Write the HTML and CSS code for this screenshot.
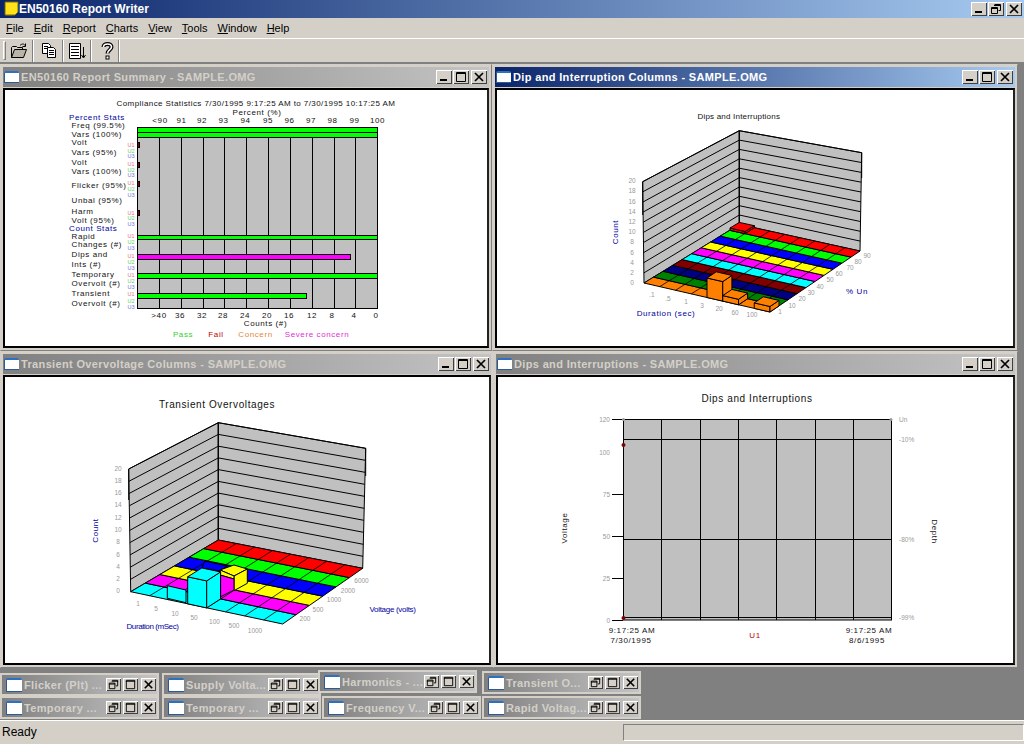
FILE: index.html
```html
<!DOCTYPE html>
<html lang="en">
<head>
    <meta charset="UTF-8">
    <title>EN50160 Report Writer</title>
    <link rel="stylesheet" href="styles.css">
</head>
<body>
<svg class="defs">
    <symbol id="g-min" viewBox="0 0 16 14"><rect x="4" y="9" width="7" height="2" fill="#000"/></symbol>
    <symbol id="g-max" viewBox="0 0 16 14"><path d="M3.5 2.5h9v9h-9z M3 3.5h10" fill="none" stroke="#000"/></symbol>
    <symbol id="g-res" viewBox="0 0 16 14"><path d="M6.5 2.5h6v6h-2 M6 3.5h7 M3.5 5.5h6v6h-6z M3 6.5h7" fill="none" stroke="#000"/></symbol>
    <symbol id="g-x" viewBox="0 0 16 14"><path d="M4 3l8 8M12 3l-8 8" fill="none" stroke="#000" stroke-width="1.7"/></symbol>
</svg>
<div class="app">
    <div class="titlebar">
        <svg class="appicon" width="16" height="16" viewBox="0 0 16 16"><path d="M0 13h3v2h6l2-2H3z" fill="#444"/><path d="M2 1h13v10l-3 3H2z" fill="#ffe21a" stroke="#7a6a00"/></svg>
        <span class="apptitle">EN50160 Report Writer</span>
        <div class="btns btns-main">
            <span class="btn"><svg class="g"><use href="#g-min"/></svg></span>
            <span class="btn"><svg class="g"><use href="#g-res"/></svg></span>
            <span class="btn btn-close"><svg class="g"><use href="#g-x"/></svg></span>
        </div>
    </div>
    <ul class="menu">
        <li><u>F</u>ile</li>
        <li><u>E</u>dit</li>
        <li><u>R</u>eport</li>
        <li><u>C</u>harts</li>
        <li><u>V</u>iew</li>
        <li><u>T</u>ools</li>
        <li><u>W</u>indow</li>
        <li><u>H</u>elp</li>
    </ul>
    <div class="toolbar">
        <span class="grip"></span>
        <span class="tool tool-open">
            <svg width="18" height="16" viewBox="0 0 18 16"><path d="M1.5 14.5V4.5l1-1h4l1 1h5v2" fill="#d4d0c8" stroke="#000"/><path d="M1.5 14.5l3-8h12l-3 8z" fill="#b8b4a8" stroke="#000"/><path d="M10 2.5c2-2 4-2 5 0M15.5 0.5v3h-3" fill="none" stroke="#000"/></svg>
        </span>
        <span class="tool tool-copy">
            <svg width="16" height="15" viewBox="0 0 16 15"><path d="M1.5 0.5h6l2 2v8h-8z" fill="#fff" stroke="#000"/><path d="M6.5 4.5h6l2 2v8h-8z" fill="#fff" stroke="#000"/><path d="M3 3.5h4M3 5.5h3M8 7.5h5M8 9.5h5M8 11.5h5" stroke="#000"/></svg>
        </span>
        <span class="tool tool-report">
            <svg width="17" height="16" viewBox="0 0 17 16"><path d="M0.5 0.5h11v15h-11z" fill="#fff" stroke="#000"/><path d="M2 3.5h8M2 6.5h8M2 9.5h8M2 12.5h8" stroke="#000"/><path d="M14.5 4v10M12.5 12l2 3 2-3" fill="none" stroke="#000"/></svg>
        </span>
        <span class="tool tool-help">
            <svg width="13" height="18" viewBox="0 0 13 18"><path d="M2.5 5c0-4 8-4 8 0 0 3-4 3-4 6.5" fill="none" stroke="#000" stroke-width="4"/><path d="M2.5 5c0-4 8-4 8 0 0 3-4 3-4 6.5" fill="none" stroke="#fff" stroke-width="1.6"/><rect x="4.5" y="13.5" width="4" height="4" fill="#000"/><rect x="5.5" y="14.5" width="2" height="2" fill="#fff"/></svg>
        </span>
    </div>

    <div class="desk">
        <!-- compliance summary -->
        <div class="win win-summary">
            <div class="cap">
                <span class="docicon"></span>
                <span class="captext">EN50160 Report Summary - SAMPLE.OMG</span>
                <div class="btns">
                    <span class="btn"><svg class="g"><use href="#g-min"/></svg></span>
                    <span class="btn"><svg class="g"><use href="#g-max"/></svg></span>
                    <span class="btn btn-close"><svg class="g"><use href="#g-x"/></svg></span>
                </div>
            </div>
            <div class="client">
                <svg class="chart" viewBox="5 90 482 256" width="482" height="256">
                    <text class="ct title1" x="256" y="106" text-anchor="middle" textLength="279" lengthAdjust="spacing">Compliance Statistics 7/30/1995 9:17:25 AM to 7/30/1995 10:17:25 AM</text>
                    <text class="ct" x="257" y="115" text-anchor="middle">Percent (%)</text>
                    <g class="ct" text-anchor="middle">
                        <text x="160" y="122.5">&lt;90</text><text x="181.5" y="122.5">91</text><text x="202" y="122.5">92</text><text x="223.5" y="122.5">93</text><text x="245.5" y="122.5">94</text><text x="268" y="122.5">95</text><text x="289.5" y="122.5">96</text><text x="311" y="122.5">97</text><text x="332.5" y="122.5">98</text><text x="354.5" y="122.5">99</text><text x="377.5" y="122.5">100</text>
                    </g>
                    <g class="ct nv">
                        <text x="69" y="119.5">Percent Stats</text>
                        <text x="69" y="230.5">Count Stats</text>
                    </g>
                    <g class="ct">
                        <text x="71.5" y="128">Freq (99.5%)</text><text x="71.5" y="137">Vars (100%)</text>
                        <text x="71.5" y="145">Volt</text><text x="71.5" y="154.5">Vars (95%)</text>
                        <text x="71.5" y="165">Volt</text><text x="71.5" y="173.5">Vars (100%)</text>
                        <text x="71.5" y="188">Flicker (95%)</text>
                        <text x="71.5" y="203">Unbal (95%)</text>
                        <text x="71.5" y="214">Harm</text><text x="71.5" y="222.5">Volt (95%)</text>
                        <text x="71.5" y="238.5">Rapid</text><text x="71.5" y="246.5">Changes (#)</text>
                        <text x="71.5" y="257">Dips and</text><text x="71.5" y="266.5">Ints (#)</text>
                        <text x="71.5" y="277">Temporary</text><text x="71.5" y="285.5">Overvolt (#)</text>
                        <text x="71.5" y="296">Transient</text><text x="71.5" y="305.5">Overvolt (#)</text>
                    </g>
                    <g class="tiny u1">
                        <text x="127.5" y="146.5">U1</text><text x="127.5" y="165.5">U1</text><text x="127.5" y="185">U1</text><text x="127.5" y="214.5">U1</text><text x="127.5" y="238">U1</text><text x="127.5" y="258">U1</text><text x="127.5" y="277">U1</text><text x="127.5" y="296">U1</text>
                    </g>
                    <g class="tiny u2">
                        <text x="127.5" y="152.5">U2</text><text x="127.5" y="171.5">U2</text><text x="127.5" y="191">U2</text><text x="127.5" y="220">U2</text><text x="127.5" y="244">U2</text><text x="127.5" y="264">U2</text><text x="127.5" y="283">U2</text><text x="127.5" y="303">U2</text>
                    </g>
                    <g class="tiny u3">
                        <text x="127.5" y="158">U3</text><text x="127.5" y="177">U3</text><text x="127.5" y="197">U3</text><text x="127.5" y="225.5">U3</text><text x="127.5" y="250">U3</text><text x="127.5" y="270">U3</text><text x="127.5" y="289">U3</text><text x="127.5" y="309">U3</text>
                    </g>
                    <rect class="wall" x="137.5" y="127.5" width="240" height="181"/>
                    <path class="ln" d="M159.5 127V309M181.5 127V309M203.5 127V309M224.5 127V309M246.5 127V309M268.5 127V309M290.5 127V309M312.5 127V309M334.5 127V309M355.5 127V309"/>
                    <g class="barg">
                        <rect class="f-green" x="137.5" y="127.5" width="240" height="5"/>
                        <rect class="f-green" x="137.5" y="132.5" width="240" height="5"/>
                        <rect class="f-maroon" x="137.5" y="142.5" width="2" height="5"/>
                        <rect class="f-maroon" x="137.5" y="162.5" width="2" height="5"/>
                        <rect class="f-maroon" x="137.5" y="181.5" width="2" height="5"/>
                        <rect class="f-maroon" x="137.5" y="210.5" width="2" height="5"/>
                        <rect class="f-green" x="137.5" y="235.5" width="240" height="4"/>
                        <rect class="f-magenta" x="137.5" y="254.5" width="213" height="5"/>
                        <rect class="f-green" x="137.5" y="273.5" width="240" height="5"/>
                        <rect class="f-green" x="137.5" y="293.5" width="169" height="5"/>
                    </g>
                    <g class="ct" text-anchor="middle">
                        <text x="159" y="317.5">&gt;40</text><text x="180" y="317.5">36</text><text x="202" y="317.5">32</text><text x="223" y="317.5">28</text><text x="245" y="317.5">24</text><text x="267" y="317.5">20</text><text x="289" y="317.5">16</text><text x="312" y="317.5">12</text><text x="332" y="317.5">8</text><text x="354" y="317.5">4</text><text x="376" y="317.5">0</text>
                        <text x="265.5" y="326">Counts (#)</text>
                    </g>
                    <g class="ct" text-anchor="middle">
                        <text class="lg-pass" x="183" y="337">Pass</text>
                        <text class="lg-fail" x="216" y="337">Fail</text>
                        <text class="lg-conc" x="255.5" y="337">Concern</text>
                        <text class="lg-sev" x="317" y="337">Severe concern</text>
                    </g>
                </svg>
            </div>
        </div>

        <!-- dip columns -->
        <div class="win win-dipcol">
            <div class="cap cap-active">
                <span class="docicon"></span>
                <span class="captext">Dip and Interruption Columns - SAMPLE.OMG</span>
                <div class="btns">
                    <span class="btn"><svg class="g"><use href="#g-min"/></svg></span>
                    <span class="btn"><svg class="g"><use href="#g-max"/></svg></span>
                    <span class="btn btn-close"><svg class="g"><use href="#g-x"/></svg></span>
                </div>
            </div>
            <div class="client">
                <svg class="chart" viewBox="497 90 516 256" width="516" height="256">
                    <text class="ct" x="739" y="119" text-anchor="middle" textLength="83" lengthAdjust="spacing">Dips and Interruptions</text>
                    <polygon class="wall" points="642.7,181.7 739.3,130.7 739.3,224.4 644,283"/>
                    <polygon class="wall" points="739.3,130.7 861.7,152.7 860,251 739.3,224.4"/>
                    <path class="ln" d="M642.7 181.7L739.3 130.7M642.8 191.8L739.3 140.1M643 202L739.3 149.4M643.1 212.1L739.3 158.8M643.2 222.2L739.3 168.2M643.4 232.4L739.3 177.6M643.5 242.5L739.3 186.9M643.6 252.6L739.3 196.3M643.7 262.7L739.3 205.7M643.9 272.9L739.3 215M739.3 130.7V224.4M642.7 181.7V215"/>
                    <path class="ln" d="M739.3 130.7L861.7 152.7M739.3 140.1L861.5 162.5M739.3 149.4L861.4 172.4M739.3 158.8L861.2 182.2M739.3 168.2L861 192M739.3 177.6L860.9 201.9M739.3 186.9L860.7 211.7M739.3 196.3L860.5 221.5M739.3 205.7L860.3 231.3M739.3 215L860.2 241.1M861.7 152.7V178"/>
                    <g class="floor">
                        <polygon class="f-orange" points="644,283 770,312 779,305.9 653.5,277.1"/>
                        <polygon class="f-dgreen" points="653.5,277.1 779,305.9 788,299.8 663.1,271.3"/>
                        <polygon class="f-navy" points="663.1,271.3 788,299.8 797,293.7 672.6,265.4"/>
                        <polygon class="f-maroon" points="672.6,265.4 797,293.7 806,287.6 682.1,259.6"/>
                        <polygon class="f-cyan" points="682.1,259.6 806,287.6 815,281.5 691.7,253.7"/>
                        <polygon class="f-magenta" points="691.7,253.7 815,281.5 824,275.4 701.2,247.8"/>
                        <polygon class="f-yellow" points="701.2,247.8 824,275.4 833,269.3 710.7,242"/>
                        <polygon class="f-blue" points="710.7,242 833,269.3 842,263.2 720.2,236.1"/>
                        <polygon class="f-green" points="720.2,236.1 842,263.2 851,257.1 729.8,230.3"/>
                        <polygon class="f-red" points="729.8,230.3 851,257.1 860,251 739.3,224.4"/>
                        <path d="M659.75 286.6L754.4 227.7M675.5 290.3L769.5 231.1M691.25 293.9L784.6 234.4M707 297.5L799.7 237.7M722.75 301.1L814.7 241M738.5 304.8L829.8 244.4M754.25 308.4L844.9 247.7"/>
                        <polygon class="f-red" points="730,228 745,231.5 745,233.65 730,230.3"/>
                        <polygon class="f-red" points="745,231.5 754.4,225.7 754.4,227.7 745,233.65"/>
                        <polygon class="f-red" points="730,228 739.3,222.4 754.4,225.7 745,231.5"/>
                        <polygon class="f-orange" points="707,297.5 722.75,301.1 722.75,281.6 707,278"/>
                        <polygon class="f-orange" points="722.75,301.1 731.9,295 731.9,275.45 722.75,281.6"/>
                        <polygon class="f-orange" points="707,278 722.75,281.6 731.9,275.45 716.25,271.8"/>
                        <polygon class="f-orange" points="722.75,301.1 738.5,304.8 738.5,299.3 722.75,295.6"/>
                        <polygon class="f-orange" points="738.5,304.8 747.6,298.7 747.6,293.1 738.5,299.3"/>
                        <polygon class="f-orange" points="722.75,295.6 738.5,299.3 747.6,293.1 731.9,289.45"/>
                        <polygon class="f-orange" points="754.25,308.4 770,312 770,306.5 754.25,302.9"/>
                        <polygon class="f-orange" points="770,312 779,305.9 779,300.4 770,306.5"/>
                        <polygon class="f-orange" points="754.25,302.9 770,306.5 779,300.4 763.3,296.75"/>
                    </g>
                    <g class="num" text-anchor="middle">
                        <text x="632" y="285">0</text><text x="632" y="275">2</text><text x="632" y="265">4</text><text x="632" y="254.5">6</text><text x="632" y="244">8</text><text x="632" y="234">10</text><text x="632" y="224">12</text><text x="632" y="214">14</text><text x="632" y="203.5">16</text><text x="632" y="193">18</text><text x="632" y="183">20</text>
                        <text x="652" y="297">.1</text><text x="668" y="301">.5</text><text x="686" y="304">1</text><text x="702" y="308">3</text><text x="719" y="311">20</text><text x="735" y="315">60</text><text x="752" y="317">100</text>
                        <text x="780" y="314">1</text><text x="792" y="308">10</text><text x="802" y="301">20</text><text x="811" y="295">30</text><text x="820" y="289">40</text><text x="830" y="282">50</text><text x="839" y="276">60</text><text x="850" y="270">70</text><text x="858" y="264">80</text><text x="867" y="258">90</text>
                    </g>
                    <text class="ct nv" transform="translate(617.5 232) rotate(-90)" text-anchor="middle">Count</text>
                    <text class="ct nv" x="666" y="316" text-anchor="middle">Duration (sec)</text>
                    <text class="ct nv" x="857" y="294" text-anchor="middle">% Un</text>
                </svg>
            </div>
        </div>

        <!-- transient columns -->
        <div class="win win-transient">
            <div class="cap">
                <span class="docicon"></span>
                <span class="captext">Transient Overvoltage Columns - SAMPLE.OMG</span>
                <div class="btns">
                    <span class="btn"><svg class="g"><use href="#g-min"/></svg></span>
                    <span class="btn"><svg class="g"><use href="#g-max"/></svg></span>
                    <span class="btn btn-close"><svg class="g"><use href="#g-x"/></svg></span>
                </div>
            </div>
            <div class="client">
                <svg class="chart" viewBox="5 377 484 286" width="484" height="286">
                    <text class="ct ct-big" x="217" y="408" text-anchor="middle">Transient Overvoltages</text>
                    <polygon class="wall" points="128.7,469 218.3,422.7 218.3,540 130.7,591.7"/>
                    <polygon class="wall" points="218.3,422.7 365.7,448.3 362.7,568.3 218.3,540"/>
                    <path class="ln" d="M128.7 469L218.3 422.7M128.9 481.3L218.3 434.4M129.1 493.5L218.3 446.2M129.3 505.8L218.3 457.9M129.5 518.1L218.3 469.6M129.7 530.4L218.3 481.4M129.9 542.6L218.3 493.1M130.1 554.9L218.3 504.8M130.3 567.2L218.3 516.5M130.5 579.4L218.3 528.3M218.3 422.7V540M128.7 469V500"/>
                    <path class="ln" d="M218.3 422.7L365.7 448.3M218.3 434.4L365.4 460.3M218.3 446.2L365.1 472.3M218.3 457.9L364.8 484.3M218.3 469.6L364.5 496.3M218.3 481.4L364.2 508.3M218.3 493.1L363.9 520.3M218.3 504.8L363.6 532.3M218.3 516.5L363.3 544.3M218.3 528.3L363 556.3M365.7 448.3V476"/>
                    <g class="floor">
                        <polygon class="f-cyan" points="130.7,591.7 282.7,624 296,614.7 145.3,583.1"/>
                        <polygon class="f-magenta" points="145.3,583.1 296,614.7 309.4,605.4 159.9,574.5"/>
                        <polygon class="f-yellow" points="159.9,574.5 309.4,605.4 322.7,596.2 174.5,565.9"/>
                        <polygon class="f-blue" points="174.5,565.9 322.7,596.2 336,586.9 189.1,557.2"/>
                        <polygon class="f-green" points="189.1,557.2 336,586.9 349.4,577.6 203.7,548.6"/>
                        <polygon class="f-red" points="203.7,548.6 349.4,577.6 362.7,568.3 218.3,540"/>
                        <path d="M149.7 595.7L236.4 543.5M168.7 599.8L254.4 547.1M187.7 603.8L272.4 550.6M206.7 607.9L290.5 554.2M225.7 611.9L308.6 557.7M244.7 615.9L326.6 561.2M263.7 620L344.7 564.8"/>
                        <polygon class="f-cyan" points="167.3,585.7 186,590 186,602.7 167.3,598.3"/>
                        <polygon class="f-blue" points="205,561 227,566 220,571 201.8,568"/>
                        <polygon class="f-yellow" points="220,570 234,565 247.3,569 234,576"/>
                        <polygon class="f-yellow" points="234,576 247.3,569 247.3,583.3 234,590.7"/>
                        <polygon class="f-yellow" points="220,570 234,576 234,579 220,575"/>
                        <polygon class="f-magenta" points="220,575 234,579 234,590 220,597"/>
                        <polygon class="f-cyan" points="187.7,603.8 206.7,607.9 206.7,580.9 187.7,576.8"/>
                        <polygon class="f-cyan" points="206.7,607.9 220.6,598.9 220.6,571.9 206.7,580.9"/>
                        <polygon class="f-cyan" points="187.7,576.8 206.7,580.9 220.6,571.9 201.8,568"/>
                    </g>
                    <g class="num" text-anchor="middle">
                        <text x="118" y="593">0</text><text x="118" y="581">2</text><text x="118" y="568.5">4</text><text x="118" y="556.5">6</text><text x="118" y="544">8</text><text x="118" y="532">10</text><text x="118" y="519.5">12</text><text x="118" y="507">14</text><text x="118" y="495">16</text><text x="118" y="483">18</text><text x="118" y="470.5">20</text>
                        <text x="138" y="606">1</text><text x="156" y="611">5</text><text x="175" y="616">10</text><text x="194" y="620">50</text><text x="214.5" y="624">100</text><text x="234" y="628">500</text><text x="255" y="633">1000</text>
                        <text x="305" y="621">200</text><text x="318" y="612">500</text><text x="334" y="602">1000</text><text x="348" y="593">2000</text><text x="361.5" y="583">6000</text>
                    </g>
                    <text class="ct nv" transform="translate(98 530.5) rotate(-90)" text-anchor="middle">Count</text>
                    <text class="ct nv" x="153" y="628.5" text-anchor="middle" textLength="53" lengthAdjust="spacing">Duration (mSec)</text>
                    <text class="ct nv" x="393" y="612" text-anchor="middle" textLength="47" lengthAdjust="spacing">Voltage (volts)</text>
                </svg>
            </div>
        </div>

        <!-- dips timeline -->
        <div class="win win-dips">
            <div class="cap">
                <span class="docicon"></span>
                <span class="captext">Dips and Interruptions - SAMPLE.OMG</span>
                <div class="btns">
                    <span class="btn"><svg class="g"><use href="#g-min"/></svg></span>
                    <span class="btn"><svg class="g"><use href="#g-max"/></svg></span>
                    <span class="btn btn-close"><svg class="g"><use href="#g-x"/></svg></span>
                </div>
            </div>
            <div class="client">
                <svg class="chart" viewBox="498 377 515 286" width="515" height="286">
                    <text class="ct ct-big" x="757" y="401.5" text-anchor="middle">Dips and Interruptions</text>
                    <rect class="wall" x="623.5" y="419.5" width="268" height="200.5"/>
                    <path class="ln" d="M661.5 420V620M700.5 420V620M738.5 420V620M776.5 420V620M815.5 420V620M853.5 420V620M624 439.5H891M624 539.5H891M624 617.5H891M612 419.5H623M612 494.5H623M612 536.5H623M612 578.5H623M612 620.5H623"/>
                    <circle class="dot" cx="623.5" cy="445" r="2"/>
                    <circle class="dot" cx="623.5" cy="618" r="2"/>
                    <circle class="gdot" cx="623.5" cy="419.5" r="1.5"/>
                    <circle class="gdot" cx="891" cy="419.5" r="1.5"/>
                    <g class="num" text-anchor="end">
                        <text x="610" y="422">120</text><text x="610" y="454.5">100</text><text x="610" y="496.5">75</text><text x="610" y="538.5">50</text><text x="610" y="580.5">25</text><text x="610" y="622.5">0</text>
                    </g>
                    <g class="num">
                        <text x="899" y="422">Un</text><text x="899" y="442">-10%</text><text x="899" y="542">-80%</text><text x="899" y="620">-99%</text>
                    </g>
                    <text class="ct" transform="translate(567 528) rotate(-90)" text-anchor="middle">Voltage</text>
                    <text class="ct" transform="translate(931.5 531.5) rotate(90)" text-anchor="middle">Depth</text>
                    <g class="ct" text-anchor="middle">
                        <text x="632" y="633">9:17:25 AM</text><text x="631" y="643">7/30/1995</text>
                        <text x="869" y="633">9:17:25 AM</text><text x="867" y="643">8/6/1995</text>
                        <text class="lg-fail" x="755" y="638">U1</text>
                    </g>
                </svg>
            </div>
        </div>

        <!-- minimized windows -->
        <div class="mini mini-a"><span class="docicon"></span><span class="captext">Flicker (Plt) ...</span><div class="btns"><span class="btn"><svg class="g"><use href="#g-res"/></svg></span><span class="btn"><svg class="g"><use href="#g-max"/></svg></span><span class="btn btn-close"><svg class="g"><use href="#g-x"/></svg></span></div></div>
        <div class="mini mini-b"><span class="docicon"></span><span class="captext">Supply Volta...</span><div class="btns"><span class="btn"><svg class="g"><use href="#g-res"/></svg></span><span class="btn"><svg class="g"><use href="#g-max"/></svg></span><span class="btn btn-close"><svg class="g"><use href="#g-x"/></svg></span></div></div>
        <div class="mini mini-d"><span class="docicon"></span><span class="captext">Transient O...</span><div class="btns"><span class="btn"><svg class="g"><use href="#g-res"/></svg></span><span class="btn"><svg class="g"><use href="#g-max"/></svg></span><span class="btn btn-close"><svg class="g"><use href="#g-x"/></svg></span></div></div>
        <div class="mini mini-c"><span class="docicon"></span><span class="captext">Harmonics - ...</span><div class="btns"><span class="btn"><svg class="g"><use href="#g-res"/></svg></span><span class="btn"><svg class="g"><use href="#g-max"/></svg></span><span class="btn btn-close"><svg class="g"><use href="#g-x"/></svg></span></div></div>
        <div class="mini mini-e"><span class="docicon"></span><span class="captext">Temporary ...</span><div class="btns"><span class="btn"><svg class="g"><use href="#g-res"/></svg></span><span class="btn"><svg class="g"><use href="#g-max"/></svg></span><span class="btn btn-close"><svg class="g"><use href="#g-x"/></svg></span></div></div>
        <div class="mini mini-f"><span class="docicon"></span><span class="captext">Temporary ...</span><div class="btns"><span class="btn"><svg class="g"><use href="#g-res"/></svg></span><span class="btn"><svg class="g"><use href="#g-max"/></svg></span><span class="btn btn-close"><svg class="g"><use href="#g-x"/></svg></span></div></div>
        <div class="mini mini-g"><span class="docicon"></span><span class="captext">Frequency V...</span><div class="btns"><span class="btn"><svg class="g"><use href="#g-res"/></svg></span><span class="btn"><svg class="g"><use href="#g-max"/></svg></span><span class="btn btn-close"><svg class="g"><use href="#g-x"/></svg></span></div></div>
        <div class="mini mini-h"><span class="docicon"></span><span class="captext">Rapid Voltag...</span><div class="btns"><span class="btn"><svg class="g"><use href="#g-res"/></svg></span><span class="btn"><svg class="g"><use href="#g-max"/></svg></span><span class="btn btn-close"><svg class="g"><use href="#g-x"/></svg></span></div></div>
    </div>

    <div class="status">
        <span class="ready">Ready</span>
        <span class="panel"></span>
    </div>
</div>
</body>
</html>
```

FILE: styles.css
```css
*{
    margin:0;
    padding:0;
    box-sizing:border-box;
}
ul{
    list-style-type:none;
}
html,body{
    width:1024px;
    height:744px;
    overflow:hidden;
}
body{
    font-family:"Liberation Sans",Arial,sans-serif;
    font-size:11px;
    background:#d4d0c8;
    color:#000;
}
.defs{
    display:none;
}
.app{
    width:1024px;
    height:744px;
    display:flex;
    flex-direction:column;
}

/* main frame */
.titlebar{
    height:18px;
    flex:none;
    display:flex;
    align-items:center;
    padding:0 2px 0 3px;
    background:linear-gradient(to right,#0a246a,#a6caf0);
}
.appicon{
    flex:none;
}
.apptitle{
    margin-left:0;
    color:#fff;
    font-weight:bold;
    font-size:12px;
}
.menu{
    height:21px;
    flex:none;
    display:flex;
    align-items:center;
    padding-left:1px;
    border-bottom:1px solid #fff;
}
.menu li{
    padding:0 5px;
    font-size:11px;
}
.toolbar{
    height:24px;
    flex:none;
    display:flex;
    align-items:center;
    padding-left:3px;
    border-bottom:1px solid #808080;
}
.grip{
    width:3px;
    height:19px;
    border-left:1px solid #fff;
    border-top:1px solid #fff;
    border-right:1px solid #808080;
    border-bottom:1px solid #808080;
}
.tool{
    height:22px;
    display:flex;
    align-items:center;
    border-right:1px solid #808080;
    box-shadow:1px 0 #fff;
}
.tool-open{
    width:27px;
    padding-left:4px;
}
.tool-copy{
    width:30px;
    padding-left:8px;
}
.tool-report{
    width:28px;
    padding-left:6px;
}
.tool-help{
    width:28px;
    padding-left:10px;
}

/* workspace */
.desk{
    flex:1;
    position:relative;
    background:#808080;
}
.win{
    position:absolute;
    display:flex;
    flex-direction:column;
    gap:1px;
    padding:2px;
    background:#d4d0c8;
    border:1px solid #808080;
    border-top-color:#d4d0c8;
    border-left-color:#d4d0c8;
}
.win-summary{
    left:0;
    top:1px;
    width:492px;
    height:287px;
}
.win-dipcol{
    left:492px;
    top:1px;
    width:526px;
    height:287px;
}
.win-transient{
    left:0;
    top:288px;
    width:494px;
    height:317px;
}
.win-dips{
    left:493px;
    top:288px;
    width:525px;
    height:317px;
}
.cap{
    height:20px;
    flex:none;
    display:flex;
    align-items:center;
    padding:0 2px;
    background:linear-gradient(to right,#808080,#c4c4c4);
}
.cap-active{
    background:linear-gradient(to right,#0a246a,#a6caf0);
}
.cap-active .captext{
    color:#fff;
}
.docicon{
    width:15px;
    height:12px;
    flex:none;
    margin-left:-1px;
    background:#fff;
    border-top:2px solid #2f6fc0;
    border-left:1px solid #2a5a9a;
    border-bottom:1px solid #2a5a9a;
    border-radius:2px 2px 0 0;
}
.captext{
    flex:1;
    margin-left:2px;
    overflow:hidden;
    white-space:nowrap;
    color:#d4d0c8;
    font-weight:bold;
    font-size:11px;
    letter-spacing:.35px;
}
.btns{
    display:flex;
    flex:none;
    gap:1px;
}
.btns-main{
    margin-left:auto;
}
.btn{
    width:16px;
    height:14px;
    background:#d4d0c8;
    box-shadow:inset 1px 1px #fff,inset -1px -1px #404040;
}
.btn-close{
    margin-left:1px;
}
.g{
    display:block;
    width:100%;
    height:100%;
}
.client{
    flex:1;
    background:#fff;
    border:2px solid #000;
    border-right-color:#222;
    overflow:hidden;
}
.chart{
    display:block;
}

/* minimized children */
.mini{
    position:absolute;
    width:159px;
    height:23px;
    display:flex;
    align-items:center;
    padding:0 1px 0 4px;
    background:linear-gradient(to right,#808080,#c4c4c4);
    border:2px solid #d4d0c8;
}
.mini .docicon{
    width:16px;
    height:14px;
    margin-left:0;
}
.mini .btns{
    gap:2px;
}
.mini .btn{
    width:15px;
    height:13px;
}
.mini-a{ left:0; top:610px; }
.mini-b{ left:162px; top:610px; }
.mini-c{ left:318px; top:607px; }
.mini-d{ left:482px; top:608px; }
.mini-e{ left:0; top:633px; }
.mini-f{ left:162px; top:633px; }
.mini-g{ left:322px; top:633px; }
.mini-h{ left:482px; top:633px; }

/* chart text and fills */
.ct{
    font-size:8px;
    letter-spacing:.6px;
    fill:#111;
}
.ct-big{
    font-size:10px;
}
.title1{
    font-size:8px;
}
.nv{
    fill:#0000a0;
}
.num{
    font-size:6.5px;
    fill:#999;
}
.tiny{
    font-size:5.5px;
}
.u1{
    fill:#e07088;
}
.u2{
    fill:#60d060;
}
.u3{
    fill:#7070e0;
}
.lg-pass{
    fill:#30d030;
}
.lg-fail{
    fill:#c00000;
}
.lg-conc{
    fill:#e08840;
}
.lg-sev{
    fill:#e030d0;
}
.wall{
    fill:#c0c0c0;
    stroke:#000;
    stroke-width:1;
}
.ln{
    fill:none;
    stroke:#000;
    stroke-width:1;
}
.floor polygon,.barg rect{
    stroke:#000;
    stroke-width:1;
}
.floor path{
    fill:none;
    stroke:#000;
    stroke-width:.8;
}
.f-orange{ fill:#ff8000; }
.f-dgreen{ fill:#008000; }
.f-navy{ fill:#000080; }
.f-maroon{ fill:#800000; }
.f-cyan{ fill:#00ffff; }
.f-magenta{ fill:#ff00ff; }
.f-yellow{ fill:#ffff00; }
.f-blue{ fill:#0000ff; }
.f-green{ fill:#00ff00; }
.f-red{ fill:#ff0000; }
.dot{
    fill:#800000;
}
.gdot{
    fill:#999;
}

/* status bar */
.status{
    height:24px;
    flex:none;
    display:flex;
    justify-content:space-between;
    align-items:flex-start;
    padding-top:3px;
    border-top:1px solid #fff;
}
.ready{
    padding-left:2px;
    font-size:12px;
    line-height:16px;
}
.panel{
    width:401px;
    height:17px;
    border:1px solid #808080;
    border-right-color:#fff;
    border-bottom-color:#fff;
}
```
